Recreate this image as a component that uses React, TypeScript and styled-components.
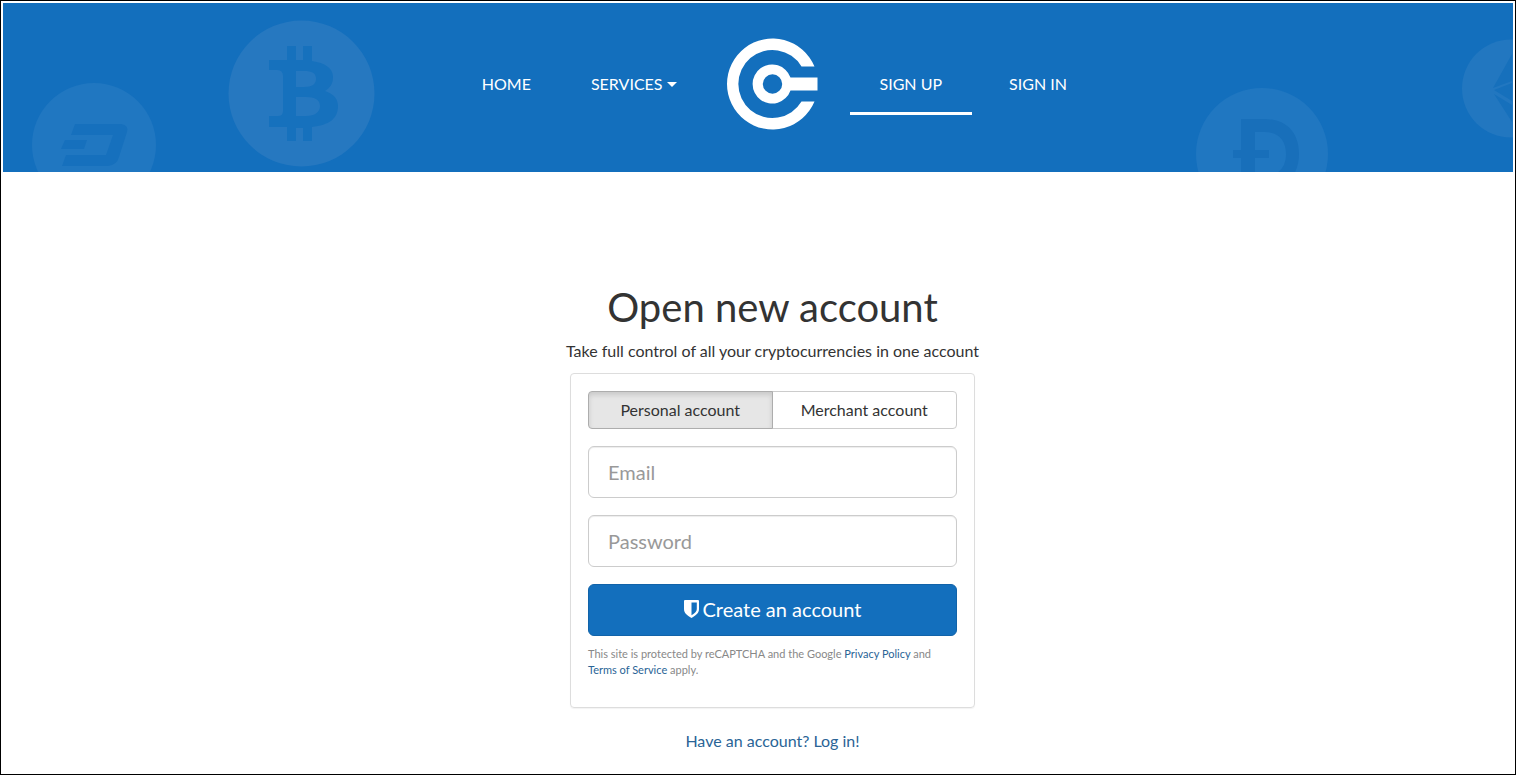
import React, { useState } from "react";
import styled, { createGlobalStyle, css } from "styled-components";

const blue = "#136fbd";
const linkBlue = "#2a6496";

const GlobalStyle = createGlobalStyle`
  *, *::before, *::after { box-sizing: border-box; }
  body {
    margin: 0;
    background: #fff;
    color: #333;
    font-family: Lato, "Liberation Sans", sans-serif;
    font-size: 16px;
    line-height: 24px;
  }
  button, input { font-family: inherit; }
`;

const Frame = styled.div`
  display: flex;
  flex-direction: column;
  min-height: 100vh;
  padding: 2px 2px 0;
  border: 1px solid #000;
  overflow: hidden;
`;

const Header = styled.header`
  position: relative;
  padding: 35px 0 42px 28px;
  background: ${blue};
  overflow: hidden;
`;

const Coins = styled.svg<{ $side: "left" | "right" }>`
  position: absolute;
  top: 0;
  ${(p) => (p.$side === "left" ? "left: 0;" : "right: 0;")}
`;

const Nav = styled.nav`
  position: relative;
  display: grid;
  grid-template-columns: 1fr auto 1fr;
  align-items: center;
`;

const NavGroup = styled.div<{ $align: "start" | "end"; $gap: number }>`
  display: flex;
  justify-content: flex-${(p) => p.$align};
  gap: ${(p) => p.$gap}px;
  padding: 0 ${(p) => (p.$align === "end" ? 20 : 0)}px 0 ${(p) => (p.$align === "start" ? 32 : 0)}px;
`;

const NavLink = styled.a<{ $active?: boolean }>`
  display: flex;
  align-items: center;
  gap: 4px;
  padding: 18px 30px 16px;
  border-bottom: 3px solid ${(p) => (p.$active ? "#fff" : "transparent")};
  color: #fff;
  text-decoration: none;
  white-space: nowrap;
`;

const Caret = styled.span`
  margin-top: 2px;
  border: 5px solid transparent;
  border-top-color: #fff;
  border-bottom: 0;
`;

const LogoLink = styled.a`
  display: block;
  height: 92px;
`;

const Main = styled.main`
  display: flex;
  flex-direction: column;
  align-items: center;
  padding: 110px 0 20px 29px;
`;

const Title = styled.h1`
  margin: 0;
  font-size: 40px;
  line-height: 50px;
  font-weight: 400;
`;

const Lead = styled.p`
  margin: 7px 0 10px;
`;

const Card = styled.form`
  display: flex;
  flex-direction: column;
  gap: 17px;
  width: 100%;
  max-width: 405px;
  padding: 17px 17px 29px;
  border: 1px solid #ddd;
  border-radius: 4px;
  box-shadow: 0 1px 1px rgba(0, 0, 0, 0.05);
`;

const Toggle = styled.div`
  display: grid;
  grid-template-columns: 1fr 1fr;
`;

const ToggleButton = styled.button`
  height: 38px;
  padding: 0 0 2px;
  border: 1px solid #ccc;
  border-radius: 0 4px 4px 0;
  background: #fff;
  color: #333;
  font-size: 16px;
  cursor: pointer;

  &:first-child {
    border-radius: 4px 0 0 4px;
  }

  &:last-child {
    margin-left: -1px;
  }

  &[aria-pressed="true"] {
    position: relative;
    border-color: #adadad;
    background: #e6e6e6;
    box-shadow: inset 0 3px 5px rgba(0, 0, 0, 0.125);
  }
`;

const control = css`
  width: 100%;
  height: 52px;
  border-radius: 6px;
  font-size: 20px;
`;

const Field = styled.input`
  ${control}
  padding: 0 19px;
  border: 1px solid #ccc;
  background: #fff;
  color: #555;
  box-shadow: inset 0 1px 1px rgba(0, 0, 0, 0.075);

  &::placeholder {
    color: #999;
    opacity: 1;
  }
`;

const Submit = styled.button`
  ${control}
  display: flex;
  align-items: center;
  justify-content: center;
  gap: 4px;
  padding: 0 0 2px;
  border: 1px solid #1163a9;
  background: ${blue};
  color: #fff;
  cursor: pointer;
`;

const Legal = styled.p`
  margin: -7px 0 0;
  color: #888;
  font-size: 11px;
  line-height: 16px;
`;

const TextLink = styled.a`
  color: ${linkBlue};
  text-decoration: none;
`;

const LoginLine = styled.p`
  margin: 21px 0 0;
`;

function LeftCoins() {
  return (
    <Coins $side="left" width="400" height="169" viewBox="3 3 400 169" aria-hidden="true">
      <circle cx="94" cy="145" r="62" fill="#2077c1" />
      <path
        d="M75 124H121Q129 125 127 132L119 157Q117 165 108 166H62L66 155H106L113 135H71Z M65 140H87L84 149H61Z"
        fill="#1670bd"
      />
      <circle cx="301.5" cy="93.5" r="73" fill="#2678c0" />
      <path
        fillRule="evenodd"
        d="M287 46H296V60H303V46H312V61C325 63 333 68 333 77C333 84 330 88 325 91C334 94 338 99 338 106C338 119 329 125 312 127V141H303V128H296V141H287V127H269V116H278Q283 116 283 111V76Q283 70 277 70H269V60H287Z M296 71V87H304C312 87 316 84 316 79C316 73 312 71 304 71Z M296 97V116H306C315 116 320 112 320 106C320 100 315 97 306 97Z"
        fill="#1671bd"
      />
    </Coins>
  );
}

function RightCoins() {
  return (
    <Coins $side="right" width="336" height="169" viewBox="1177 3 336 169" aria-hidden="true">
      <circle cx="1262" cy="154" r="66" fill="#2077c1" />
      <path
        fillRule="evenodd"
        d="M1241 119H1264C1286 119 1299 132 1299 154C1299 176 1286 188 1264 188H1241V158H1233V150H1241Z M1255 132V150H1269V158H1255V176H1264C1278 176 1286 168 1286 154C1286 140 1278 132 1264 132Z"
        fill="#186fba"
      />
      <circle cx="1511" cy="88.500" r="49" fill="#2277c0" />
      <path d="M1512 54V81L1493 88Z M1512 83V101L1494 90Z M1512 122V105L1494 94Z" fill="#1670bc" />
    </Coins>
  );
}

function Logo() {
  return (
    <svg width="91" height="92" viewBox="0 0 91 92" role="img" aria-label="Company logo">
      <path
        d="M87.500 28.500A45.500 45.500 0 1 0 87.500 63.500H74.500A34 34 0 1 1 74.500 28.500Z"
        fill="#fff"
      />
      <path
        fillRule="evenodd"
        d="M63.500 39.500H90.500V52.500H63.500A19.500 19.500 0 1 1 63.500 39.500Z M45.500 36.300A9.700 9.700 0 1 0 45.500 55.700A9.700 9.700 0 1 0 45.500 36.300Z"
        fill="#fff"
      />
    </svg>
  );
}

function ShieldIcon() {
  return (
    <svg width="15" height="18" viewBox="0 0 15 18" aria-hidden="true">
      <path
        fillRule="evenodd"
        d="M1 0H14Q15 0 15 1V9C15 13 12 15.500 7.500 18C3 15.500 0 13 0 9V1Q0 0 1 0Z M7.500 2.500V15.200C11 13 12.800 11.500 12.800 9V2.500Z"
        fill="#fff"
      />
    </svg>
  );
}

export default function App() {
  const [account, setAccount] = useState("personal");

  return (
    <>
      <GlobalStyle />
      <Frame>
        <Header>
          <LeftCoins />
          <RightCoins />
          <Nav>
            <NavGroup $align="end" $gap={0}>
              <NavLink href="#home">HOME</NavLink>
              <NavLink href="#services">
                SERVICES
                <Caret />
              </NavLink>
            </NavGroup>
            <LogoLink href="#home">
              <Logo />
            </LogoLink>
            <NavGroup $align="start" $gap={7}>
              <NavLink href="#sign-up" $active>
                SIGN UP
              </NavLink>
              <NavLink href="#sign-in">SIGN IN</NavLink>
            </NavGroup>
          </Nav>
        </Header>
        <Main>
          <Title>Open new account</Title>
          <Lead>Take full control of all your cryptocurrencies in one account</Lead>
          <Card onSubmit={(e) => e.preventDefault()}>
            <Toggle role="group" aria-label="Account type">
              <ToggleButton
                type="button"
                aria-pressed={account === "personal"}
                onClick={() => setAccount("personal")}
              >
                Personal account
              </ToggleButton>
              <ToggleButton
                type="button"
                aria-pressed={account === "merchant"}
                onClick={() => setAccount("merchant")}
              >
                Merchant account
              </ToggleButton>
            </Toggle>
            <Field type="email" placeholder="Email" aria-label="Email" />
            <Field type="password" placeholder="Password" aria-label="Password" />
            <Submit type="submit">
              <ShieldIcon />
              Create an account
            </Submit>
            <Legal>
              This site is protected by reCAPTCHA and the Google{" "}
              <TextLink href="#privacy">Privacy Policy</TextLink> and{" "}
              <TextLink href="#terms">Terms of Service</TextLink> apply.
            </Legal>
          </Card>
          <LoginLine>
            <TextLink href="#sign-in">Have an account? Log in!</TextLink>
          </LoginLine>
        </Main>
      </Frame>
    </>
  );
}
